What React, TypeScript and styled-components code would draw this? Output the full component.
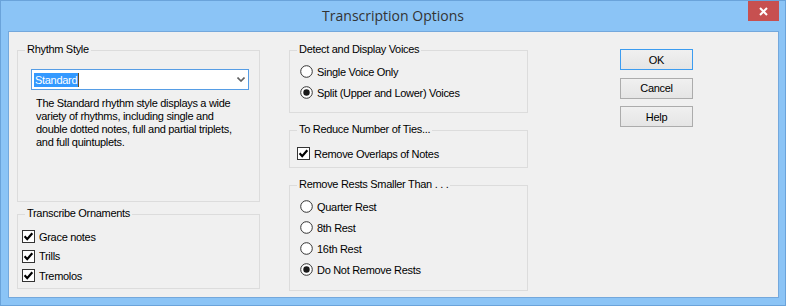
import React from 'react';
import styled, {createGlobalStyle} from 'styled-components';

const GlobalStyle = createGlobalStyle`
  html, body {
    margin: 0;
    padding: 0;
    background: #8bc4f6;
  }
  body {
    font-family: "Liberation Sans", Arial, sans-serif;
  }
`;

const Window = styled.div`
  width: 786px;
  height: 306px;
  box-sizing: border-box;
  background: #8bc4f6;
  border: 1px solid #6aa3da;
  display: flex;
  flex-direction: column;
`;

const TitleBar = styled.div`
  height: 30px;
  display: grid;
  grid-template-columns: 1fr auto 1fr;
  align-items: start;
`;

const Title = styled.div`
  grid-column: 2;
  font-family: "Open Sans", "Noto Sans", sans-serif;
  font-size: 14px;
  line-height: 30px;
  color: #333;
`;

const CloseButton = styled.div`
  grid-column: 3;
  justify-self: end;
  margin-right: 6px;
  width: 31px;
  height: 20px;
  background: #c75050;
  display: flex;
  align-items: center;
  justify-content: center;
`;

const Client = styled.div`
  margin-left: 7px;
  width: 771px;
  height: 267px;
  box-sizing: border-box;
  border: 1px solid #74a8dc;
  background: #f0f0f0;
  display: flex;
  align-items: flex-start;
  padding: 18px 0 0 8px;
  font-size: 11px;
  letter-spacing: -0.3px;
  color: #000;
`;

const Column = styled.div<{ $width: number; $left?: number }>`
  width: ${p => p.$width}px;
  margin-left: ${p => p.$left ?? 0}px;
  display: flex;
  flex-direction: column;
`;

const Group = styled.div<{ $height: number; $gap?: number; $pad: string }>`
  position: relative;
  box-sizing: border-box;
  height: ${p => p.$height}px;
  margin-bottom: ${p => p.$gap ?? 0}px;
  border: 1px solid #dcdcdc;
  padding: ${p => p.$pad};
`;

const Caption = styled.span`
  position: absolute;
  top: -8px;
  left: 7px;
  padding: 0 2px;
  line-height: 13px;
  background: #f0f0f0;
  white-space: nowrap;
`;

const Combo = styled.div`
  width: 218px;
  height: 21px;
  box-sizing: border-box;
  border: 1px solid #569de5;
  background: #fff;
  display: flex;
  align-items: center;
  padding: 0 3px 0 2px;
`;

const Selected = styled.span`
  background: #3399ff;
  color: #fff;
  line-height: 14px;
  padding: 0 1px;
  border-right: 1px solid #6b4a1a;
`;

const Chevron = styled.svg`
  margin-left: auto;
`;

const Description = styled.p`
  margin: 7px 0 0 5px;
  line-height: 13px;
`;

const Option = styled.label<{ $row: number }>`
  display: flex;
  align-items: center;
  gap: 4px;
  height: ${p => p.$row}px;
  white-space: nowrap;
`;

const ButtonStack = styled.div`
  margin: -1px 0 0 92px;
  display: flex;
  flex-direction: column;
  gap: 7.5px;
`;

const Button = styled.button<{ $default?: boolean }>`
  width: 73px;
  height: 21px;
  padding: 0;
  box-sizing: border-box;
  border: 1px solid ${p => (p.$default ? '#3c9cf0' : '#acacac')};
  background: linear-gradient(#f0f0f0, #e5e5e5);
  font-family: "Liberation Sans", Arial, sans-serif;
  font-size: 11px;
  letter-spacing: -0.3px;
  color: #000;
`;

const CheckBox = () => (
    <svg width="13" height="13" viewBox="0 0 13 13">
        <rect x="0.5" y="0.5" width="12" height="12" fill="#fff" stroke="#333"/>
        <path d="M2.6 6.3 L5.2 9.2 L10.3 3.2" fill="none" stroke="#000" strokeWidth="2.2"/>
    </svg>
);

const Radio: React.FC<{ checked?: boolean }> = ({checked}) => (
    <svg width="13" height="13" viewBox="0 0 13 13">
        <circle cx="6.5" cy="6.5" r="5.8" fill="#fff" stroke="#333"/>
        {checked && <circle cx="6.5" cy="6.5" r="3.2" fill="#1a1a1a"/>}
    </svg>
);

const App: React.FC = () => {
    return (
        <Window>
            <GlobalStyle/>
            <TitleBar>
                <Title>Transcription Options</Title>
                <CloseButton>
                    <svg width="9" height="9" viewBox="0 0 9 9">
                        <path d="M1 1 L8 8 M8 1 L1 8" stroke="#fff" strokeWidth="2"/>
                    </svg>
                </CloseButton>
            </TitleBar>
            <Client>
                <Column $width={243}>
                    <Group $height={152} $gap={12} $pad="18px 0 0 13px">
                        <Caption>Rhythm Style</Caption>
                        <Combo>
                            <Selected>Standard</Selected>
                            <Chevron width="8" height="5" viewBox="0 0 8 5">
                                <path d="M0.5 0.5 L4 4 L7.5 0.5" fill="none" stroke="#606060" strokeWidth="1.6"/>
                            </Chevron>
                        </Combo>
                        <Description>
                            The Standard rhythm style displays a wide<br/>
                            variety of rhythms, including single and<br/>
                            double dotted notes, full and partial triplets,<br/>
                            and full quintuplets.
                        </Description>
                    </Group>
                    <Group $height={75} $pad="12px 0 0 4px">
                        <Caption>Transcribe Ornaments</Caption>
                        <Option $row={19.5}><CheckBox/>Grace notes</Option>
                        <Option $row={19.5}><CheckBox/>Trills</Option>
                        <Option $row={19.5}><CheckBox/>Tremolos</Option>
                    </Group>
                </Column>
                <Column $width={239} $left={29}>
                    <Group $height={63} $gap={17} $pad="10px 0 0 10px">
                        <Caption>Detect and Display Voices</Caption>
                        <Option $row={21}><Radio/>Single Voice Only</Option>
                        <Option $row={21}><Radio checked/>Split (Upper and Lower) Voices</Option>
                    </Group>
                    <Group $height={38} $gap={17} $pad="12px 0 0 7px">
                        <Caption>To Reduce Number of Ties...</Caption>
                        <Option $row={21}><CheckBox/>Remove Overlaps of Notes</Option>
                    </Group>
                    <Group $height={106} $pad="10px 0 0 10px">
                        <Caption>Remove Rests Smaller Than . . .</Caption>
                        <Option $row={21}><Radio/>Quarter Rest</Option>
                        <Option $row={21}><Radio/>8th Rest</Option>
                        <Option $row={21}><Radio/>16th Rest</Option>
                        <Option $row={21}><Radio checked/>Do Not Remove Rests</Option>
                    </Group>
                </Column>
                <ButtonStack>
                    <Button $default>OK</Button>
                    <Button>Cancel</Button>
                    <Button>Help</Button>
                </ButtonStack>
            </Client>
        </Window>
    );
};

export default App;
